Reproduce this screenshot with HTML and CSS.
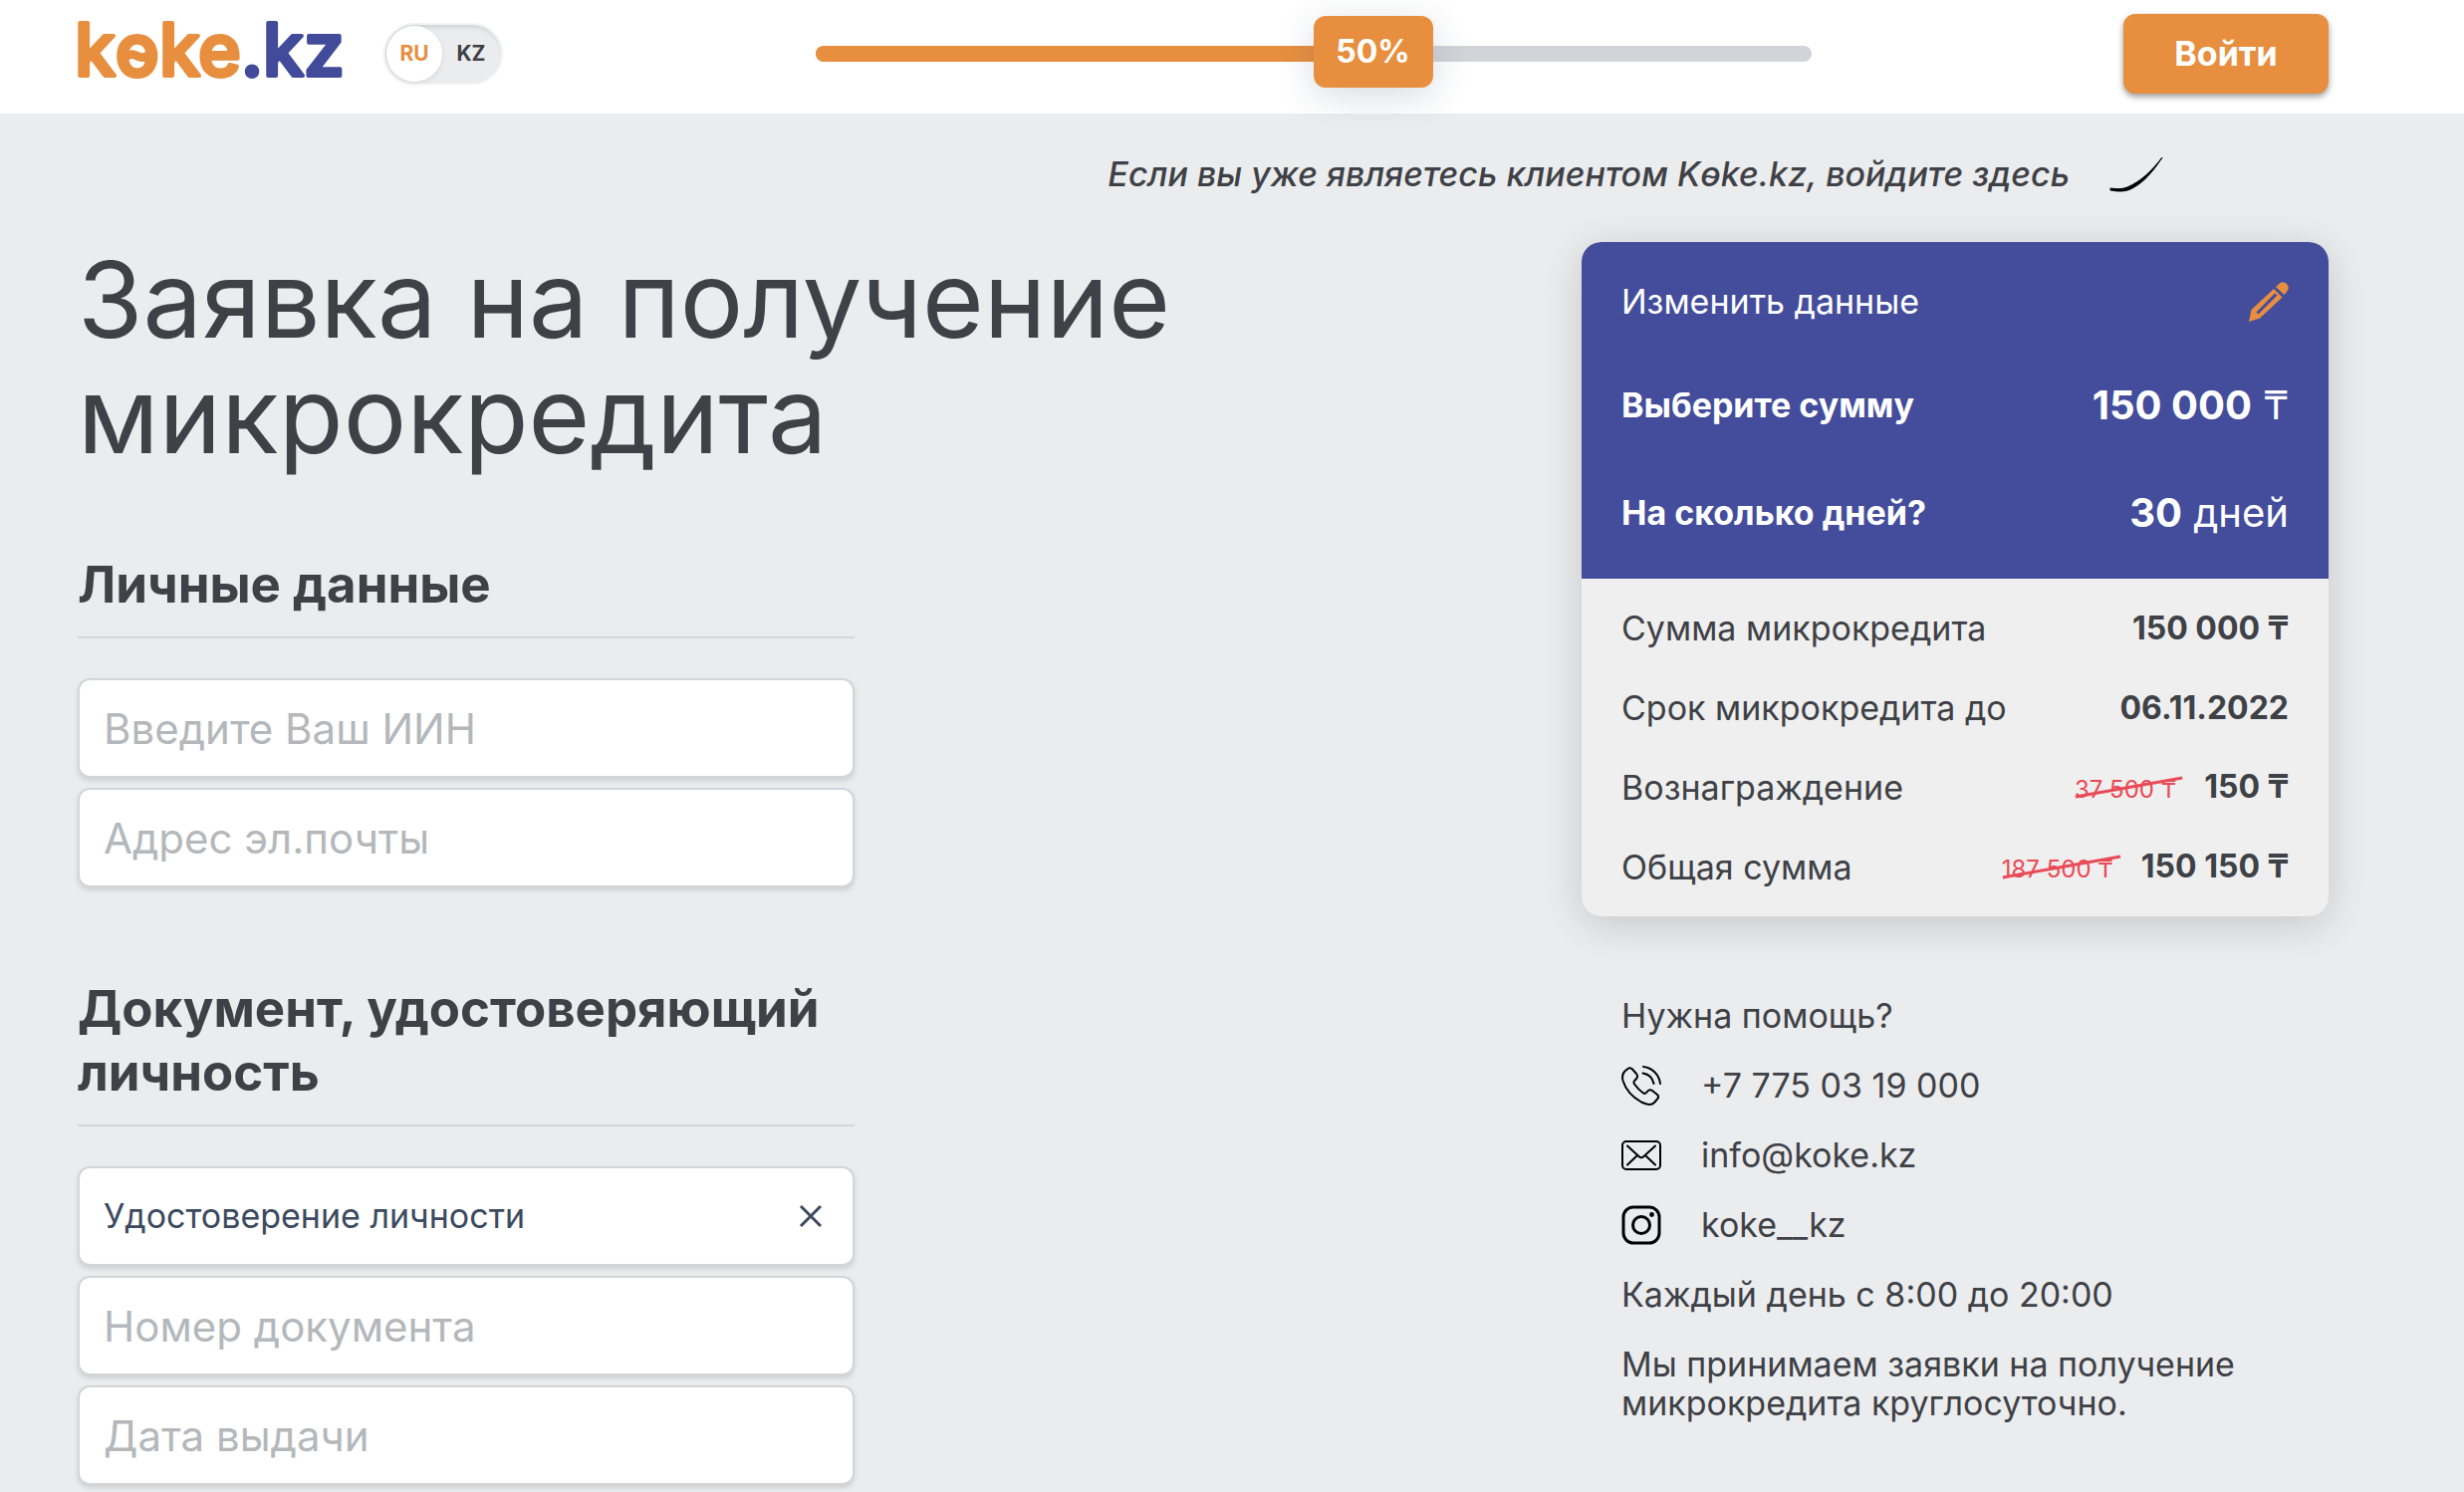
FILE: index.html
```html
<!DOCTYPE html>
<html lang="ru">
<head>
<meta charset="utf-8">
<meta name="viewport" content="width=device-width, initial-scale=1">
<title>Koke.kz</title>
<link rel="stylesheet" href="styles.css">
</head>
<body>
<header class="topbar">
  <div class="brand">
    <a class="logo" href="#" aria-label="kөke.kz">
      <svg width="265" height="72" viewBox="0 0 265 72" aria-hidden="true">
        <text class="logo-text" x="-3" y="58"><tspan class="logo-main">kөke</tspan><tspan class="logo-zone">.kz</tspan></text>
      </svg>
    </a>
    <div class="lang" role="group" aria-label="Язык">
      <button class="lang-item lang-active" type="button">RU</button>
      <button class="lang-item" type="button">KZ</button>
    </div>
  </div>
  <div class="progress" role="progressbar" aria-valuenow="50" aria-valuemin="0" aria-valuemax="100">
    <div class="progress-fill" style="width:50%"></div>
    <span class="progress-label">50%</span>
  </div>
  <button class="login" type="button">Войти</button>
</header>

<main class="page">
  <p class="hint">
    <span>Если вы уже являетесь клиентом Kөke.kz, войдите здесь</span>
    <svg class="hint-arrow" width="54" height="36" viewBox="0 0 54 36" aria-hidden="true">
      <path d="M1 32 C8 33 13 33 18 31 C32 25 43 14 53 1 C44 15 34 27 21 33 C14 36 7 35 1 34 Z" fill="#000" stroke="#000" stroke-linejoin="round"/>
    </svg>
  </p>

  <div class="columns">
    <form class="application">
      <h1>Заявка на получение микрокредита</h1>

      <section class="group">
        <h2>Личные данные</h2>
        <input class="field" type="text" placeholder="Введите Ваш ИИН" aria-label="ИИН">
        <input class="field" type="email" placeholder="Адрес эл.почты" aria-label="Адрес эл.почты">
      </section>

      <section class="group">
        <h2>Документ, удостоверяющий личность</h2>
        <div class="field picker">
          <select class="picker-select" aria-label="Тип документа">
            <option>Удостоверение личности</option>
          </select>
          <button class="picker-clear" type="button" aria-label="Очистить">
            <svg width="24" height="24" viewBox="0 0 24 24"><path d="M2 2 L22 22 M22 2 L2 22" fill="none" stroke="#3c4a60" stroke-width="3"/></svg>
          </button>
        </div>
        <input class="field" type="text" placeholder="Номер документа" aria-label="Номер документа">
        <input class="field" type="text" placeholder="Дата выдачи" aria-label="Дата выдачи">
      </section>
    </form>

    <aside class="side">
      <section class="card">
        <div class="card-top">
          <div class="choice choice-edit">
            <span>Изменить данные</span>
            <button class="edit" type="button" aria-label="Изменить данные">
              <svg width="40" height="40" viewBox="0 0 40 40">
                <path fill="#e78f3f" fill-rule="evenodd" d="M25 7 L33.500 15.500 L11 36.500 L0 40 L2.500 28 Z M26 11.500 L7.500 30.500 L9.500 32.500 L28.500 13.500 Z"/>
                <path fill="#e78f3f" d="M27 5 L31 1.500 C33.500 -.500 36 .200 38 2.200 C40.200 4.400 40.500 7 38.500 9.200 L35.500 13 Z"/>
              </svg>
            </button>
          </div>
          <div class="choice">
            <b>Выберите сумму</b>
            <span class="choice-value"><b>150 000</b> ₸</span>
          </div>
          <div class="choice">
            <b>На сколько дней?</b>
            <span class="choice-value"><b>30</b> дней</span>
          </div>
        </div>
        <dl class="summary">
          <div class="line"><dt>Сумма микрокредита</dt><dd>150 000 ₸</dd></div>
          <div class="line"><dt>Срок микрокредита до</dt><dd>06.11.2022</dd></div>
          <div class="line"><dt>Вознаграждение</dt><dd><s class="old">37 500 ₸</s>150 ₸</dd></div>
          <div class="line"><dt>Общая сумма</dt><dd><s class="old">187 500 ₸</s>150 150 ₸</dd></div>
        </dl>
      </section>

      <section class="help">
        <p>Нужна помощь?</p>
        <a class="contact" href="tel:+77750319000">
          <svg width="40" height="40" viewBox="0 0 40 40" fill="none" stroke="#000" stroke-width="2" stroke-linecap="round" stroke-linejoin="round">
            <path d="M4 5 L6.500 3 C8 2 9.500 2 11 3.500 L15 8 C16.500 10 16.500 11.500 15 13 C12.500 15.500 11.500 16.500 13.500 19 C16 22.500 19 25.500 22 27.500 C23.500 28.500 24.500 28 26 26 C27.500 24 29.500 24 31 25 L36 29 C37.500 30.500 37.500 32 36 33.500 L33 37 C30 40 26 39.500 20 36.500 C11 31.500 4 23 1.500 15 C.500 11 1 7.500 4 5 Z"/>
            <path d="M22 1 C31 2 38 9 39 18 M21.500 7.500 C27.500 8.500 31.500 12.500 32.500 18"/>
          </svg>
          <span>+7 775 03 19 000</span>
        </a>
        <a class="contact" href="mailto:info@koke.kz">
          <svg width="40" height="30" viewBox="0 0 40 30" fill="none" stroke="#000" stroke-width="2" stroke-linecap="round" stroke-linejoin="round">
            <rect x="1" y="1" width="38" height="28" rx="4"/>
            <path d="M6 5.500 L17.500 16 Q20 18.500 22.500 16 L34 5.500 M6 24.500 L15.500 15.500 M34 24.500 L24.500 15.500"/>
          </svg>
          <span>info@koke.kz</span>
        </a>
        <a class="contact" href="#">
          <svg width="40" height="40" viewBox="0 0 40 40" fill="none" stroke="#000">
            <rect x="2" y="2" width="36" height="36" rx="10" stroke-width="3"/>
            <circle cx="20" cy="20" r="8.500" stroke-width="3"/>
            <circle cx="30.500" cy="9.500" r="2.400" fill="#000" stroke="none"/>
          </svg>
          <span>koke__kz</span>
        </a>
        <p>Каждый день с 8:00 до 20:00</p>
        <p>Мы принимаем заявки на получение микрокредита круглосуточно.</p>
      </section>
    </aside>
  </div>
</main>
</body>
</html>
```

FILE: styles.css
```css
* { box-sizing: border-box; }

:root {
  --orange: #e78f3f;
  --blue: #434d9b;
  --ink: #3e4146;
  --line: #d3d5d8;
  --bg: #ebecee;
}

body {
  margin: 0;
  min-height: 100vh;
  background: var(--bg);
  color: var(--ink);
  font: 400 34px/40px Inter, "Open Sans", sans-serif;
}

h1, h2, p, dl, dd { margin: 0; }
button, input, select { font: inherit; color: inherit; margin: 0; }
button { border: 0; background: none; padding: 0; cursor: pointer; }
svg { display: block; flex: none; }
a { color: inherit; text-decoration: none; }

/* Header */
.topbar {
  display: flex;
  align-items: center;
  justify-content: space-between;
  gap: 40px;
  height: 114px;
  padding: 0 136px 6px 78px;
  background: #fff;
}
.brand { display: flex; align-items: center; gap: 42px; }
.logo svg { overflow: visible; }
.logo-text {
  font-size: 73px;
  font-weight: 500;
  stroke-width: 4;
  stroke-linejoin: round;
}
.logo-main { fill: var(--orange); stroke: var(--orange); }
.logo-zone { fill: #414b9a; stroke: #414b9a; }

.lang {
  display: flex;
  flex: none;
  width: 120px;
  height: 62px;
  padding: 1px;
  border: 2px solid #f2f3f4;
  border-radius: 31px;
  background: var(--bg);
  box-shadow: inset 2px 3px 4px #d3d5d8;
}
.lang-item {
  flex: 1;
  height: 56px;
  font-size: 21px;
  font-weight: 700;
}
.lang-active {
  flex: 0 0 56px;
  border-radius: 50%;
  background: #fff;
  color: var(--orange);
  box-shadow: 0 2px 6px rgba(0, 0, 0, .08);
}

.progress {
  position: relative;
  flex: 0 1 1000px;
  height: 16px;
  border-radius: 8px;
  background: #d3d4d9;
}
.progress-fill { height: 100%; border-radius: 8px 0 0 8px; background: var(--orange); }
.progress-label {
  position: absolute;
  left: 50%;
  top: -30px;
  width: 120px;
  border-radius: 12px;
  background: var(--orange);
  box-shadow: 0 8px 36px rgba(62, 75, 100, .2);
  color: #fff;
  font-size: 32px;
  font-weight: 700;
  line-height: 72px;
  text-align: center;
}
.login {
  width: 206px;
  height: 80px;
  border-radius: 12px;
  background: var(--orange);
  box-shadow: 0 3px 6px rgba(0, 0, 0, .4);
  color: #fff;
  font-weight: 700;
}

/* Page */
.page { padding: 0 136px 0 78px; }
.hint {
  display: flex;
  align-items: center;
  justify-content: flex-end;
  gap: 40px;
  height: 129px;
  padding: 0 166px 8px 0;
  font-style: italic;
  font-weight: 500;
}
.columns {
  display: grid;
  grid-template-columns: minmax(0, 1fr) 750px;
  gap: 200px;
  align-items: start;
}

/* Form */
h1 { font-size: 106px; line-height: 116px; font-weight: 400; max-width: 1200px; }
.group { display: grid; gap: 10px; max-width: 780px; margin-top: 80px; }
.group + .group { margin-top: 90px; }
h2 {
  margin-bottom: 30px;
  padding-bottom: 20px;
  border-bottom: 2px solid var(--line);
  font-size: 51px;
  line-height: 64px;
  font-weight: 700;
}
.field {
  width: 100%;
  height: 100px;
  padding: 0 24px;
  border: 2px solid var(--line);
  border-radius: 12px;
  background: #fff;
  box-shadow: 0 3px 5px rgba(0, 0, 0, .12);
  font-size: 42px;
}
.field::placeholder { color: #b4b8bb; opacity: 1; }
.picker { display: flex; align-items: center; padding-right: 30px; }
.picker-select {
  flex: 1;
  height: 60px;
  padding: 0;
  border: 0;
  appearance: none;
  background: none;
  color: #3c4a60;
  font-size: 34px;
}

/* Loan card */
.card {
  overflow: hidden;
  border-radius: 20px;
  background: #efefef;
  box-shadow: 0 8px 40px rgba(0, 0, 0, .16);
}
.card-top { padding: 10px 40px 12px; background: var(--blue); color: #fff; }
.choice {
  display: flex;
  align-items: center;
  justify-content: space-between;
  height: 108px;
}
.choice-edit { height: 100px; }
.choice-value { font-size: 40px; }
.summary { padding: 10px 40px 9px; }
.line { display: flex; align-items: center; justify-content: space-between; height: 80px; }
.line dd { font-size: 32px; font-weight: 700; }
.old {
  position: relative;
  margin-right: 28px;
  color: #ea4a55;
  font-size: 24px;
  font-weight: 400;
  text-decoration: none;
}
.old::after {
  content: "";
  position: absolute;
  left: 0;
  top: 38%;
  width: 107%;
  height: 3px;
  background: #ea4a55;
  transform: rotate(-10deg);
}

/* Help */
.help {
  display: grid;
  gap: 31px;
  margin-top: 80px;
  padding: 0 40px;
  line-height: 39px;
}
.contact { display: flex; align-items: center; gap: 40px; height: 39px; }
```
